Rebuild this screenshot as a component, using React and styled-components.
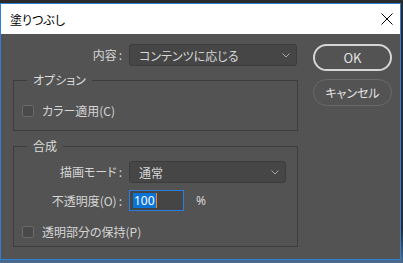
import React from "react";
import styled, { createGlobalStyle } from "styled-components";

const GlobalStyle = createGlobalStyle`
  html, body {
    margin: 0;
    padding: 0;
  }

  body {
    width: 403px;
    height: 263px;
    overflow: hidden;
    background: linear-gradient(to bottom, #2b2b2b 0, #2b2b2b 230px, #4a6d92 263px);
    font-family: "Noto Sans CJK JP", "Noto Sans", sans-serif;
  }
`;

const Window = styled.div`
  box-sizing: border-box;
  margin-top: 3px;
  width: 401px;
  height: 257px;
  border: 1px solid #2f7fd3;
  background: #535353;
  display: flex;
  flex-direction: column;
`;

const TitleBar = styled.div`
  height: 30px;
  flex: none;
  background: #ffffff;
  display: flex;
  align-items: center;
  justify-content: space-between;
  padding: 0 7px 0 9px;
  color: #000;
  font-size: 12px;
  font-feature-settings: "palt";
`;

const Body = styled.div`
  display: flex;
  gap: 15px;
  padding: 10px 8px 0 12px;
`;

const Form = styled.div`
  width: 285px;
  display: flex;
  flex-direction: column;
`;

const Row = styled.div`
  display: flex;
  align-items: center;
  height: ${(p) => p.$h || 22}px;
  margin-top: ${(p) => p.$mt || 0}px;
  padding-left: ${(p) => p.$pl || 0}px;
`;

const Label = styled.div`
  box-sizing: border-box;
  width: ${(p) => p.$w}px;
  padding-right: 5px;
  text-align: right;
  font-size: 12px;
  line-height: 16px;
  color: #d6d6d6;
  font-feature-settings: "palt";
  white-space: nowrap;
`;

const Colon = styled.span`
  margin-left: 2px;
`;

const Select = styled.div`
  box-sizing: border-box;
  width: ${(p) => p.$w}px;
  height: 22px;
  margin-left: 2px;
  display: flex;
  align-items: center;
  justify-content: space-between;
  padding: 0 6px 0 9px;
  background: #464646;
  border: 1px solid #3c3c3c;
  border-radius: 3px;
  font-size: 12px;
  color: #d8d8d8;
  font-feature-settings: "palt";
`;

const Group = styled.fieldset`
  margin: ${(p) => p.$mt}px 0 0;
  padding: 0 0 ${(p) => p.$pb}px;
  border: 1px solid #3d3d3d;
  min-width: 0;
`;

const Legend = styled.legend`
  margin-left: 13px;
  padding: 0 6px;
  font-size: 12px;
  line-height: 14px;
  color: #dcdcdc;
  font-feature-settings: "palt";
`;

const Box = styled.span`
  box-sizing: border-box;
  width: 12px;
  height: 12px;
  border: 1px solid #6a6a6a;
  background: #4a4a4a;
  border-radius: 2px;
`;

const CheckText = styled.span`
  margin-left: 8px;
  font-size: 12px;
  line-height: 16px;
  color: #d6d6d6;
  font-feature-settings: "palt";
`;

const NumberInput = styled.div`
  box-sizing: border-box;
  width: 55px;
  height: 21px;
  margin-left: 2px;
  border: 1px solid #2a7de1;
  background: #454545;
  display: flex;
  align-items: center;
  padding-left: 3px;
  font-family: "Noto Sans", sans-serif;
  font-size: 12px;
`;

const Selected = styled.span`
  background: #0a74d6;
  color: #fff;
  line-height: 15px;
  padding: 0 1px;
`;

const Caret = styled.span`
  width: 1px;
  height: 15px;
  background: #e08a3a;
`;

const Unit = styled.span`
  margin-left: 12px;
  font-family: "Noto Sans", sans-serif;
  font-size: 12px;
  color: #d6d6d6;
`;

const Buttons = styled.div`
  display: flex;
  flex-direction: column;
  gap: 8px;
`;

const Button = styled.button`
  box-sizing: border-box;
  width: 79px;
  height: 27px;
  border-radius: 14px;
  background: transparent;
  border: ${(p) => (p.$primary ? "2px solid #d6d6d6" : "1px solid #6a6a6a")};
  color: #e2e2e2;
  font-family: "Noto Sans CJK JP", "Noto Sans", sans-serif;
  font-size: ${(p) => (p.$primary ? 13 : 12)}px;
  font-feature-settings: "palt";
  padding: 0;
`;

const Chevron = () => (
  <svg width="8" height="5" viewBox="0 0 8 5">
    <path d="M0.5 0.5 L4 4 L7.5 0.5" fill="none" stroke="#a8a8a8" strokeWidth="1" />
  </svg>
);

const Close = () => (
  <svg width="12" height="12" viewBox="0 0 12 12">
    <path d="M0.5 0.5 L11.5 11.5 M11.5 0.5 L0.5 11.5" stroke="#000" strokeWidth="1" />
  </svg>
);

export default function App() {
  return (
    <>
      <GlobalStyle />
      <Window>
        <TitleBar>
          <span>塗りつぶし</span>
          <Close />
        </TitleBar>
        <Body>
          <Form>
            <Row>
              <Label $w={114}>
                内容<Colon>:</Colon>
              </Label>
              <Select $w={168}>
                <span>コンテンツに応じる</span>
                <Chevron />
              </Select>
            </Row>

            <Group $mt={7} $pb={11}>
              <Legend>オプション</Legend>
              <Row $h={16} $mt={16} $pl={8}>
                <Box />
                <CheckText>カラー適用(C)</CheckText>
              </Row>
            </Group>

            <Group $mt={8} $pb={6}>
              <Legend>合成</Legend>
              <Row $mt={8}>
                <Label $w={113}>
                  描画モード<Colon>:</Colon>
                </Label>
                <Select $w={157}>
                  <span>通常</span>
                  <Chevron />
                </Select>
              </Row>
              <Row $h={21} $mt={7}>
                <Label $w={113}>
                  不透明度(O)<Colon>:</Colon>
                </Label>
                <NumberInput>
                  <Selected>100</Selected>
                  <Caret />
                </NumberInput>
                <Unit>%</Unit>
              </Row>
              <Row $h={16} $mt={13} $pl={8}>
                <Box />
                <CheckText>透明部分の保持(P)</CheckText>
              </Row>
            </Group>
          </Form>

          <Buttons>
            <Button $primary>OK</Button>
            <Button>キャンセル</Button>
          </Buttons>
        </Body>
      </Window>
    </>
  );
}
